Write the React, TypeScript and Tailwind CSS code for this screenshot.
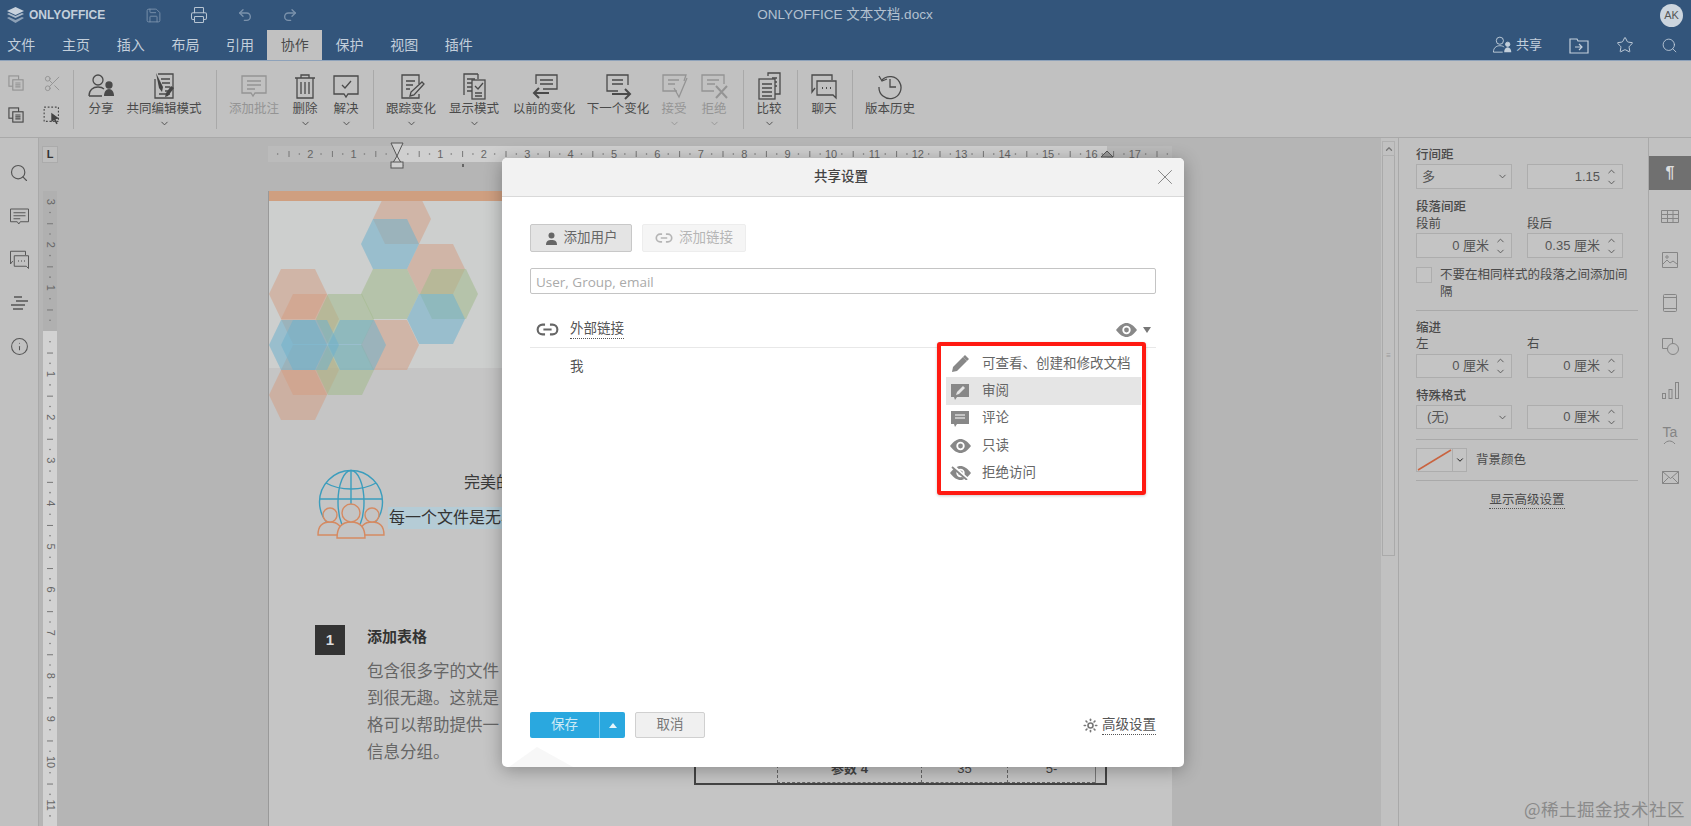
import type { ReactNode } from 'react';
import clsx from 'clsx';
import { ChevronDown, ChevronUp, Info, Printer, Redo2, Save, Scissors, Search, Star, Sun, Undo2, X } from 'lucide-react';

const Ico = ({ size = 28, sw = 1.3, children }: { size?: number; sw?: number; children: ReactNode }) => (
  <svg width={size} height={size} viewBox="0 0 28 28" fill="none" stroke="currentColor" strokeWidth={sw}>
    {children}
  </svg>
);

const CopyIco = () => (
  <Ico size={18} sw={1.8}>
    <rect x="3" y="3" width="15" height="16" />
    <rect x="9" y="9" width="16" height="16" fill="#c0c0c0" />
    <path d="M13 14h8M13 17h8M13 20h8" />
  </Ico>
);
const SelectIco = () => (
  <Ico size={20} sw={1.6}>
    <rect x="3" y="3" width="20" height="20" strokeDasharray="2.5 2.5" />
    <path d="M13 11l11 8-5 1 3 6-2 1-3-6-4 3z" fill="#444" stroke="none" />
  </Ico>
);
const ShareIco = ({ size = 28 }: { size?: number }) => (
  <Ico size={size}>
    <circle cx="11" cy="8" r="5" />
    <path d="M2 24c0-6 4-9 9-9 3 0 5 1 6 2M2 24h13" />
    <circle cx="22" cy="13" r="3" fill="currentColor" />
    <path d="M17 24c0-4 2-7 5-7s5 3 5 7z" fill="currentColor" stroke="none" />
  </Ico>
);
const CoEditIco = () => (
  <Ico>
    <path d="M8 2h15v24H5V7M11 7h9M12 11h8M15 15h5M15 19h5M9 22h11" />
    <path d="M6 1l7 14-1 5-3-4z" fill="#444" stroke="none" />
    <path d="M21 14l3 2-6 8-3 1 1-4z" fill="#444" stroke="none" />
  </Ico>
);
const NoteIco = () => (
  <Ico>
    <path d="M2 4h24v17H15l-2 3-2-3H2z" />
    <path d="M7 9h14M7 13h14M7 17h8" />
  </Ico>
);
const TrashIco = () => (
  <Ico>
    <path d="M4 6h20M10 6V3h8v3M6 6v20h16V6M10 10v12M14 10v12M18 10v12" />
  </Ico>
);
const ResolveIco = () => (
  <Ico>
    <path d="M2 4h24v18H16l-2 3-2-3H2z" />
    <path d="M10 13l3 3 6-7" />
  </Ico>
);
const TrackIco = () => (
  <Ico>
    <path d="M22 12V3H5v23h17v-4M9 9h9M9 13h7M9 17h4" />
    <path d="M25 10l2 2-10 11-4 1 1-4z" fill="#c0c0c0" />
  </Ico>
);
const DisplayIco = () => (
  <Ico>
    <path d="M4 23V2h14M18 2v5M7 7h8M7 11h5M7 15h5M7 19h5" />
    <rect x="12" y="8" width="13" height="19" />
    <path d="M15 14l3 3 5-6M15 21h7M15 24h7" />
  </Ico>
);
const PrevIco = () => (
  <Ico>
    <path d="M6 12V3h21v14H13M10 8h13M10 12h13" />
    <path d="M19 21H4M9 16l-5 5 5 5" strokeWidth="2" />
  </Ico>
);
const NextIco = () => (
  <Ico>
    <path d="M14 19H3V3h21v10M8 8h11M8 12h11" />
    <path d="M8 22h18M21 17l5 5-5 5" strokeWidth="2" />
  </Ico>
);
const AcceptIco = () => (
  <Ico>
    <path d="M17 19H3V3h23l-2 6M8 8h11M8 12h7" />
    <path d="M14 16l5 9 8-19" />
  </Ico>
);
const RejectIco = () => (
  <Ico>
    <path d="M14 19H2V3h22v9M7 8h12M7 12h8" />
    <path d="M16 14l11 12M27 14L16 26" strokeWidth="2" />
  </Ico>
);
const CompareIco = () => (
  <Ico>
    <path d="M13 4V1h12v21h-5" />
    <rect x="4" y="7" width="16" height="20" />
    <path d="M7 12h10M7 16h10M7 20h10M7 24h10M17 6h5M20 10h2M20 14h2" />
  </Ico>
);
const ChatIco = ({ size = 28 }: { size?: number }) => (
  <Ico size={size}>
    <path d="M5 16l-3 4V3h20v5" />
    <path d="M7 9h19v17l-3-3H7z" />
    <path d="M12 16h1M16 16h1M20 16h1" strokeWidth="2" />
  </Ico>
);
const HistoryIco = () => (
  <Ico>
    <path d="M6 8a11 11 0 1 1-3 7" />
    <path d="M3 4l3 5 5-2M14 7v8h6" />
  </Ico>
);
const LinkIco = ({ size = 20 }: { size?: number }) => (
  <Ico size={size}>
    <path d="M11 8H8a6 6 0 0 0 0 12h3M17 8h3a6 6 0 0 1 0 12h-3M9 14h10" strokeWidth="2.6" />
  </Ico>
);
const EyeIco = ({ off }: { off?: boolean }) => (
  <svg width="21" height="14" viewBox="0 0 21 14">
    <path d="M0 7C4 2 7 0 10.5 0S17 2 21 7c-4 5-7 7-10.5 7S4 12 0 7z" fill="#888" />
    <circle cx="10.5" cy="7" r="4.2" fill="#fff" />
    <circle cx="10.5" cy="7" r="2.4" fill="#888" />
    {off && <path d="M3 0l15 14" stroke="#fff" strokeWidth="3.5" />}
    {off && <path d="M2 1l15 13" stroke="#888" strokeWidth="1.8" />}
  </svg>
);
const PencilIco = () => (
  <svg width="18" height="18" viewBox="0 0 18 18">
    <path d="M1 17l1-5L12 2l4 4L6 16z" fill="#888" />
    <path d="M12 2l2-2 4 4-2 2z" fill="#888" />
  </svg>
);
const ReviewIco = () => (
  <svg width="18" height="17" viewBox="0 0 18 17">
    <path d="M0 1h18v13H6l-2 3-1-3H0z" fill="#888" />
    <path d="M5 12l1-3 6-6 2 2-6 6z" fill="#e5e5e5" />
  </svg>
);
const CommentIco = () => (
  <svg width="18" height="17" viewBox="0 0 18 17">
    <path d="M0 1h18v13H6l-2 3-1-3H0z" fill="#888" />
    <path d="M4 5h10M4 8h10" stroke="#fff" strokeWidth="1.2" />
  </svg>
);
const Logo = () => (
  <svg width="17" height="17" viewBox="0 0 17 17" fill="#c8d2dd">
    <path d="M8.5 0L17 4 8.5 8 0 4z" />
    <path d="M0 7l2-1 6.5 3L15 6l2 1-8.5 4z" opacity=".8" />
    <path d="M0 11l2-1 6.5 3L15 10l2 1-8.5 5z" opacity=".6" />
  </svg>
);

const hexes: [number, number, string][] = [
  [402, 218, 'o'], [436, 268, 'o'], [390, 344, 'o'], [298, 293, 'o'], [310, 318, 'o'], [310, 369, 'o'], [298, 394, 'o'],
  [390, 293, 'g'], [449, 293, 'g'], [345, 318, 'g'], [345, 369, 'g'],
  [390, 243, 'b'], [436, 318, 'b'], [357, 344, 'b'], [298, 344, 'b'], [310, 344, 'b'],
];
const hexFill: Record<string, string> = { o: '#d49c80', b: '#6fb0cc', g: '#a3b98c' };

const Hexagons = () => (
  <svg className="absolute left-0 top-0" width="240" height="226" viewBox="269 200 240 226">
    {hexes.map(([x, y, c], i) => (
      <polygon
        key={i}
        points={`${x - 29},${y} ${x - 17},${y - 25} ${x + 17},${y - 25} ${x + 29},${y} ${x + 17},${y + 25} ${x - 17},${y + 25}`}
        fill={hexFill[c]}
        fillOpacity={c === 'o' ? 0.5 : 0.55}
      />
    ))}
  </svg>
);

const Globe = () => (
  <svg width="68" height="70" viewBox="0 0 68 70" fill="none" strokeWidth="1.4">
    <g stroke="#3b9dbd">
      <circle cx="34" cy="33" r="31.5" />
      <ellipse cx="34" cy="33" rx="13" ry="31.5" />
      <path d="M34 1v40M3 30h62M9 14c14 8 36 8 50 0" />
    </g>
    <g stroke="#d58a62" fill="#c4c4c4">
      <path d="M1 66c0-10 5-13 12-13s12 3 12 13z" />
      <path d="M43 66c0-10 5-13 12-13s12 3 12 13z" />
      <circle cx="13" cy="46" r="7" />
      <circle cx="55" cy="46" r="7" />
      <path d="M20 69c0-12 6-16 14-16s14 4 14 16z" />
      <circle cx="34" cy="44" r="9" />
    </g>
  </svg>
);

const HRuler = () => {
  const zero = 129;
  const cm = 43.4;
  const marks = Array.from({ length: 21 }, (_, i) => i - 3);
  return (
    <svg className="overflow-visible" width="904" height="16" viewBox="0 0 904 16">
      <rect width="904" height="16" fill="#bbbbbb" />
      <rect x={zero} width="710" height="16" fill="#cfcfcf" />
      {marks.map((n) => (
        <g key={n}>
          {n !== 0 && n > -3 && (
            <text x={zero + n * cm} y="12" textAnchor="middle" fontSize="11" fill="#666">
              {Math.abs(n)}
            </text>
          )}
          <circle cx={zero + (n + 0.25) * cm} cy="8" r="0.8" fill="#777" />
          <rect x={zero + (n + 0.5) * cm} y="5" width="1" height="6" fill="#777" />
          <circle cx={zero + (n + 0.75) * cm} cy="8" r="0.8" fill="#777" />
        </g>
      ))}
      <path d="M123-3h12l-6 13zM129 10l-6 10h12z" fill="#cfcfcf" stroke="#555" />
      <rect x="123" y="16" width="12" height="6" fill="#cfcfcf" stroke="#555" />
      <path d="M833 11l6-6 6 6z" fill="#999" stroke="#555" />
      <rect x="194" y="18" width="2" height="3" fill="#666" />
    </svg>
  );
};

const VRuler = () => {
  const zero = 140;
  const cm = 43.1;
  const marks = Array.from({ length: 15 }, (_, i) => i - 3);
  return (
    <svg width="14" height="640" viewBox="0 0 14 640">
      <rect width="14" height="140" fill="#b0b0b0" />
      <rect y="140" width="14" height="500" fill="#d2d2d2" />
      {marks.map((n) => (
        <g key={n}>
          {n !== 0 && (
            <text x="7" y={zero + n * cm} transform={`rotate(90 7 ${zero + n * cm})`} textAnchor="middle" dominantBaseline="middle" fontSize="11" fill="#666">
              {Math.abs(n)}
            </text>
          )}
          <circle cx="7" cy={zero + (n + 0.25) * cm} r="0.8" fill="#777" />
          <rect x="4" y={zero + (n + 0.5) * cm} width="6" height="1" fill="#777" />
          <circle cx="7" cy={zero + (n + 0.75) * cm} r="0.8" fill="#777" />
        </g>
      ))}
    </svg>
  );
};

const Sep = () => <div className="mt-[9px] h-[59px] w-px shrink-0 bg-[#a9a9a9]" />;

const ToolBtn = ({ w, label, icon, caret, dim }: { w: string; label: string; icon: ReactNode; caret?: boolean; dim?: boolean }) => (
  <div className={clsx('flex shrink-0 flex-col items-center pt-[11px]', w, dim ? 'text-[#949494]' : 'text-[#4a4a4a]')}>
    <div className="h-7">{icon}</div>
    <div className="mt-px h-4 whitespace-nowrap text-[12.5px] leading-4">{label}</div>
    {caret && <ChevronDown size={11} strokeWidth={2} className="mt-[1px]" />}
  </div>
);

const Toolbar = () => (
  <div className="flex h-[76px] shrink-0 bg-[#c1c1c1]">
    <div className="mt-[6px] grid h-16 w-[73px] shrink-0 grid-cols-[32px_36px] grid-rows-2 place-items-center gap-x-[2px] text-[#4a4a4a]">
      <span className="text-[#949494]"><CopyIco /></span>
      <Scissors size={19} strokeWidth={1.2} className="text-[#949494]" />
      <CopyIco />
      <SelectIco />
    </div>
    <Sep />
    <ToolBtn w="w-[54px]" label="分享" icon={<ShareIco />} />
    <ToolBtn w="w-[72px] mr-[16px]" label="共同编辑模式" icon={<CoEditIco />} caret />
    <Sep />
    <ToolBtn w="w-[74px]" label="添加批注" icon={<NoteIco />} dim />
    <ToolBtn w="w-[28px]" label="删除" icon={<TrashIco />} caret />
    <ToolBtn w="w-[54px]" label="解决" icon={<ResolveIco />} caret />
    <Sep />
    <ToolBtn w="w-[74px]" label="跟踪变化" icon={<TrackIco />} caret />
    <ToolBtn w="w-[52px]" label="显示模式" icon={<DisplayIco />} caret />
    <ToolBtn w="w-[88px]" label="以前的变化" icon={<PrevIco />} />
    <ToolBtn w="w-[60px]" label="下一个变化" icon={<NextIco />} />
    <ToolBtn w="w-[52px]" label="接受" icon={<AcceptIco />} caret dim />
    <ToolBtn w="w-[28px] mr-[15px]" label="拒绝" icon={<RejectIco />} caret dim />
    <Sep />
    <ToolBtn w="w-[50px] mr-[3px]" label="比较" icon={<CompareIco />} caret />
    <Sep />
    <ToolBtn w="w-[52px] mr-[2px]" label="聊天" icon={<ChatIco />} />
    <Sep />
    <ToolBtn w="w-[74px]" label="版本历史" icon={<HistoryIco />} />
  </div>
);

const tabs = ['文件', '主页', '插入', '布局', '引用', '协作', '保护', '视图', '插件'];

const Header = () => (
  <div className="shrink-0 bg-[#33557b] text-[#c3cfdb]">
    <div className="flex h-[30px] items-center">
      <div className="flex flex-1 items-center pl-[7px]">
        <Logo />
        <span className="ml-[5px] text-[12px] font-bold leading-none">ONLYOFFICE</span>
        <Save size={17} strokeWidth={1.3} className="ml-[40px] text-[#7b92ac]" />
        <Printer size={18} strokeWidth={1.4} className="ml-[28px] text-[#b7c4d2]" />
        <Undo2 size={16} strokeWidth={2} className="ml-[29px] text-[#7b92ac]" />
        <Redo2 size={16} strokeWidth={2} className="ml-[29px] text-[#7b92ac]" />
      </div>
      <div className="text-[13.5px] text-[#b3c1d0]">ONLYOFFICE 文本文档.docx</div>
      <div className="flex flex-1 justify-end pr-2">
        <div className="flex h-[23px] w-[23px] items-center justify-center rounded-full bg-[#ccd5de] text-[11px] text-[#555]">AK</div>
      </div>
    </div>
    <div className="flex h-[31px] items-end border-b border-[#8ea2ba]">
      <div className="flex">
        {tabs.map((t, i) => (
          <div key={t} className={clsx('flex h-[30px] w-[54.7px] items-center justify-center text-[14px]', i === 0 && '-ml-[6px]', t === '协作' && 'bg-[#c1c1c1] text-[#4a4a4a]')}>
            {t}
          </div>
        ))}
      </div>
      <div className="ml-auto flex h-[30px] items-center pr-[13px]">
        <ShareIco size={20} />
        <span className="ml-[4px] text-[13px]">共享</span>
        <svg className="ml-[27px]" width="20" height="18" viewBox="0 0 20 18" fill="none" stroke="currentColor" strokeWidth="1.2">
          <path d="M1 3h7l1 2h10v12H1zM6 11h7M10 8l3 3-3 3" />
        </svg>
        <Star size={18} strokeWidth={1.3} className="ml-[27px]" />
        <Search size={17} strokeWidth={1.2} className="ml-[27px]" />
      </div>
    </div>
  </div>
);

const LeftBar = () => (
  <div className="flex w-[39px] shrink-0 flex-col items-center border-r border-[#a9a9a9] bg-[#c1c1c1] pt-[13px] text-[#555]">
    <div className="flex h-[43.5px] items-center"><Search size={20} strokeWidth={1.4} /></div>
    <div className="flex h-[43.5px] items-center"><Ico size={21}><path d="M2 4h24v17H15l-2 3-2-3H2z" /><path d="M6 9h16M6 13h16M6 17h9" /></Ico></div>
    <div className="flex h-[43.5px] items-center"><ChatIco size={21} /></div>
    <div className="flex h-[43.5px] items-center">
      <svg width="18" height="14" viewBox="0 0 18 14" stroke="currentColor" strokeWidth="1.4"><path d="M4 1h8M6 5h12M1 9h14M3 13h10" /></svg>
    </div>
    <div className="flex h-[43.5px] items-center"><Info size={19} strokeWidth={1.3} /></div>
  </div>
);

const Canvas = () => (
  <div className="flex min-w-0 flex-1 overflow-hidden bg-[#b5b5b5]">
    <div className="ml-[3px] w-4 shrink-0 pt-2">
      <div className="flex h-[17px] w-4 items-center justify-center border border-[#ababab] bg-[#bebebe] text-[11px] font-black leading-none text-[#333]">L</div>
      <div className="ml-px mt-[28px]"><VRuler /></div>
    </div>
    <div className="ml-[210px] w-[904px] shrink-0 pt-2">
      <HRuler />
      <Page />
    </div>
  </div>
);

const Page = () => (
  <div className="mt-[29px] h-[700px] border-l border-[#999] bg-[#c5c5c5]">
    <div className="h-[10px] bg-[#cf9f80]" />
    <div className="relative h-[167px] bg-[#cdcfce]">
      <Hexagons />
    </div>
    <div className="ml-[48px] mt-[101px] flex">
      <Globe />
      <div className="ml-[3px] w-[200px] whitespace-nowrap text-[16px]">
        <div className="ml-[76px] h-[26px] leading-7 text-[#3a3a3a]">完美的</div>
        <div className="mt-[12px] h-[22px] bg-[#b5ccd6] pl-px leading-[22px] text-[#333]">每一个文件是无与伦比</div>
      </div>
    </div>
    <div className="ml-[46px] mt-[86px] flex">
      <div className="flex w-[379px] shrink-0">
        <div className="flex h-[30px] w-[30px] shrink-0 items-center justify-center bg-[#333] text-[15px] font-bold text-[#ddd]">1</div>
        <div className="ml-[22px]">
          <div className="text-[15px] font-bold leading-6 text-[#333]">添加表格</div>
          <div className="mt-[9px] whitespace-nowrap text-[16.5px] leading-[27px] text-[#666]">
            <div>包含很多字的文件</div>
            <div>到很无趣。这就是</div>
            <div>格可以帮助提供一</div>
            <div>信息分组。</div>
          </div>
        </div>
      </div>
      <div className="mt-[67px] grid h-[93px] w-[413px] shrink-0 grid-cols-[81px_144px_86px_88px_10px] items-end border-2 border-[#444] text-center text-[13px] text-[#444]">
        <div className="h-7" />
        <div className="h-7 border-b border-l border-dashed border-[#666] font-bold leading-7">参数 4</div>
        <div className="h-7 border-b border-l border-dashed border-[#666] leading-7">35</div>
        <div className="h-7 border-b border-l border-dashed border-[#666] leading-7">5-</div>
        <div className="h-7 border-l border-[#777]" />
      </div>
    </div>
    <div className="ml-[46px] mt-[42px] flex">
      <div className="h-5 w-[30px] bg-[#444]" />
      <div className="ml-[349px] w-[413px] border-t border-[#555]" />
    </div>
  </div>
);

const Spin = ({ value }: { value: string }) => (
  <div className="flex h-full w-24 items-center justify-end border border-[#adadad] bg-[#c4c4c4] pr-[5px] text-[13px] text-[#555]">
    <span>{value}</span>
    <div className="ml-[6px] flex flex-col text-[#555]">
      <ChevronUp size={11} strokeWidth={2} />
      <ChevronDown size={11} strokeWidth={2} />
    </div>
  </div>
);

const Sel = ({ value, pad }: { value: string; pad: string }) => (
  <div className={clsx('flex h-full w-24 items-center justify-between border border-[#adadad] bg-[#c4c4c4] pr-[3px] text-[13px] text-[#555]', pad)}>
    <span>{value}</span>
    <ChevronDown size={11} strokeWidth={2} />
  </div>
);

const Label = ({ children, bold, cls }: { children: ReactNode; bold?: boolean; cls?: string }) => (
  <div className={clsx('h-4 text-[12.5px] leading-4 text-[#4a4a4a]', bold && 'font-medium', cls)}>{children}</div>
);

const Rule = ({ cls }: { cls: string }) => <div className={clsx('h-px bg-[#a9a9a9]', cls)} />;

const RightPanel = () => (
  <div className="flex shrink-0">
    <div className="ml-px w-[13px] bg-[#c1c1c1]">
      <div className="mt-[3px] flex h-[15px] items-center justify-center border border-[#b0b0b0] text-[#777]">
        <ChevronUp size={10} strokeWidth={3} />
      </div>
      <div className="flex h-[400px] items-center justify-center border border-t-0 border-[#aaaaaa] text-[8px] leading-[3px] text-[#999]">≡</div>
    </div>
    <div className="ml-[3px] w-[251px] border-x border-[#a9a9a9] bg-[#c1c1c1] pl-[17px] pr-[10px]">
      <Label bold cls="mt-[9px]">行间距</Label>
      <div className="mt-px flex h-[25px] gap-[15px]"><Sel value="多" pad="pl-[5px]" /><Spin value="1.15" /></div>
      <Label bold cls="mt-[10px]">段落间距</Label>
      <div className="flex gap-[15px]"><Label cls="mt-px w-24">段前</Label><Label cls="mt-px w-24">段后</Label></div>
      <div className="mt-px flex h-[25px] gap-[15px]"><Spin value="0 厘米" /><Spin value="0.35 厘米" /></div>
      <div className="mt-[9px] flex">
        <div className="h-[16px] w-[16px] shrink-0 border border-[#adadad] bg-[#c4c4c4]" />
        <div className="ml-2 w-[192px] text-[12.5px] leading-[17px] text-[#4a4a4a]">不要在相同样式的段落之间添加间隔</div>
      </div>
      <Rule cls="mt-[9px]" />
      <Label bold cls="mt-[9px]">缩进</Label>
      <div className="flex gap-[15px]"><Label cls="w-24">左</Label><Label cls="w-24">右</Label></div>
      <div className="mt-[2px] flex h-6 gap-[15px]"><Spin value="0 厘米" /><Spin value="0 厘米" /></div>
      <Label bold cls="mt-[10px]">特殊格式</Label>
      <div className="mt-px flex h-6 gap-[15px]"><Sel value="(无)" pad="pl-[10px]" /><Spin value="0 厘米" /></div>
      <Rule cls="mt-[10px]" />
      <div className="mt-[8px] flex items-center">
        <div className="flex h-6 w-[51px] items-center border border-[#adadad] bg-[#c4c4c4]">
          <svg width="35" height="22" viewBox="0 0 35 22"><path d="M1 21L34 1" stroke="#c9633f" strokeWidth="1.5" /></svg>
          <div className="flex h-full flex-1 items-center justify-center border-l border-[#adadad]"><ChevronDown size={10} strokeWidth={2} /></div>
        </div>
        <span className="ml-[9px] text-[12.5px] text-[#4a4a4a]">背景颜色</span>
      </div>
      <Rule cls="mt-[8px]" />
      <div className="mt-[6px] text-center">
        <span className="border-b border-dotted border-[#555] pb-px text-[12.5px] leading-4 text-[#4a4a4a]">显示高级设置</span>
      </div>
    </div>
    <div className="flex w-[42px] flex-col items-center bg-[#c1c1c1] pt-[13px] text-[#858585]">
      <div className="flex h-[43.5px] w-full items-center">
        <div className="flex h-[34px] w-full items-center justify-center bg-[#707070] text-[16px] font-bold text-[#ddd]">¶</div>
      </div>
      <div className="flex h-[43.5px] items-center">
        <svg width="18" height="13" viewBox="0 0 18 13" fill="none" stroke="currentColor"><path d="M.5.5h17v12H.5zM.5 4.5h17M.5 8.5h17M6.5.5v12M12 .5v12" /></svg>
      </div>
      <div className="flex h-[43.5px] items-center">
        <svg width="16" height="16" viewBox="0 0 16 16" fill="none" stroke="currentColor"><path d="M.5.5h15v15H.5zM1 12l4-4 3 3 3-2 4 3" /><circle cx="5" cy="5" r="1.2" /></svg>
      </div>
      <div className="flex h-[43.5px] items-center">
        <svg width="14" height="18" viewBox="0 0 14 18" fill="none" stroke="currentColor"><rect x=".5" y=".5" width="13" height="17" rx="1" /><path d="M1 3.5h12M1 14.5h12" /></svg>
      </div>
      <div className="flex h-[43.5px] items-center">
        <svg width="17" height="17" viewBox="0 0 17 17" fill="none" stroke="currentColor"><path d="M6 10.5H.5v-10h10V6" /><circle cx="11" cy="11" r="5.5" /></svg>
      </div>
      <div className="flex h-[43.5px] items-center">
        <svg width="17" height="17" viewBox="0 0 17 17" fill="none" stroke="currentColor"><rect x=".5" y="11.5" width="3" height="5" /><rect x="7" y="7.5" width="3" height="9" /><rect x="13.5" y=".5" width="3" height="16" /></svg>
      </div>
      <div className="flex h-[43.5px] flex-col items-center justify-center text-[14px] leading-[16px]">
        <span>Ta</span>
        <svg width="13" height="4" viewBox="0 0 13 4" fill="none" stroke="currentColor"><path d="M1 4c3-4 8-4 11 0" /></svg>
      </div>
      <div className="flex h-[43.5px] items-center">
        <svg width="17" height="13" viewBox="0 0 17 13" fill="none" stroke="currentColor"><path d="M.5.5h16v12H.5zM.5.5l8 7 8-7M.5 12.5l6-6M16.5 12.5l-6-6" /></svg>
      </div>
    </div>
  </div>
);

const accessRows = [
  { icon: <PencilIco />, text: '可查看、创建和修改文档' },
  { icon: <ReviewIco />, text: '审阅', active: true },
  { icon: <CommentIco />, text: '评论' },
  { icon: <EyeIco />, text: '只读' },
  { icon: <EyeIco off />, text: '拒绝访问' },
];

const Dialog = () => (
  <div className="absolute left-[502px] top-[158px] flex h-[609px] w-[682px] flex-col rounded-[5px] bg-white shadow-[0_3px_18px_rgba(0,0,0,0.3)]">
    <div className="flex h-[39px] shrink-0 items-center rounded-t-[5px] border-b border-[#d9d9d9] bg-[#f2f2f2] pl-[312px] pr-[6px]">
      <span className="text-[13.5px] font-medium text-[#444]">共享设置</span>
      <X size={26} strokeWidth={0.8} className="ml-auto text-[#777]" />
    </div>
    <div className="relative flex flex-1 flex-col px-7">
      <div className="mt-[27px] flex gap-[10px] text-[13.5px]">
        <div className="flex h-7 w-[102px] items-center justify-center rounded-[2px] border border-[#c8c8c8] bg-[#e4e4e4] text-[#666]">
          <svg width="13" height="13" viewBox="0 0 13 13" fill="#666"><circle cx="6.5" cy="3.5" r="3" /><path d="M1 13c0-4 2-5 5.5-5s5.5 1 5.5 5z" /></svg>
          <span className="ml-[6px]">添加用户</span>
        </div>
        <div className="flex h-7 w-[104px] items-center justify-center rounded-[2px] border border-[#ededed] bg-[#f5f5f5] text-[#b5b5b5]">
          <LinkIco size={18} />
          <span className="ml-[6px]">添加链接</span>
        </div>
      </div>
      <div className="mt-4 flex h-[26px] items-center rounded-[2px] border border-[#c4c4c4] pl-[5px] pt-[2px] font-['Open_Sans',sans-serif] text-[13.5px] text-[#aaa]">User, Group, email</div>
      <div className="mt-4 flex h-[38px] items-center border-b border-[#e8e8e8] pt-[2px] text-[#666]">
        <span className="ml-[6px] w-[34px]"><LinkIco size={23} /></span>
        <span className="border-b border-dotted border-[#555] text-[13.5px] leading-[18px] text-[#555]">外部链接</span>
        <span className="ml-auto"><EyeIco /></span>
        <span className="ml-[6px] mr-[5px] h-0 w-0 border-x-[4px] border-t-[6px] border-x-transparent border-t-[#777]" />
      </div>
      <div className="ml-10 mt-[9px] text-[13.5px] leading-5 text-[#555]">我</div>
      <div className="mb-[29px] mt-auto flex h-[26px] items-center">
        <div className="flex h-full w-[95px] rounded-[2px] bg-[#2aa8df] text-[13.5px] text-[#cdeaf6]">
          <div className="flex w-[69px] items-center justify-center">保存</div>
          <div className="flex flex-1 items-center justify-center border-l border-[#7ccbee]">
            <span className="h-0 w-0 border-x-[4px] border-b-[5px] border-x-transparent border-b-[#e6f5fb]" />
          </div>
        </div>
        <div className="ml-[10px] flex h-full w-[70px] items-center justify-center rounded-[2px] border border-[#d0d0d0] bg-[#f0f0f0] text-[13.5px] text-[#777]">取消</div>
        <Sun size={15} strokeWidth={2.6} className="ml-auto text-[#777]" />
        <span className="ml-[4px] border-b border-dotted border-[#555] text-[13.5px] leading-[18px] text-[#555]">高级设置</span>
      </div>
      <svg className="absolute bottom-0 left-[7px]" width="64" height="20" viewBox="0 0 64 20"><path d="M28 0l36 20H0z" fill="#f7f7f7" /></svg>
      <div className="absolute left-[435px] top-[145px] h-[153px] w-[209px] rounded-[3px] border-4 border-[#ff1a12] bg-white pt-1 shadow-[0_1px_3px_rgba(0,0,0,0.2)]">
        {accessRows.map((r) => (
          <div key={r.text} className={clsx('ml-[5px] mr-px flex h-[27.4px] items-center text-[13.5px] text-[#666]', r.active && 'bg-[#e5e5e5]')}>
            <span className="flex w-7 justify-center">{r.icon}</span>
            <span className="ml-2 whitespace-nowrap">{r.text}</span>
          </div>
        ))}
      </div>
    </div>
  </div>
);

export default function App() {
  return (
    <div className="relative flex h-screen w-full flex-col overflow-hidden bg-[#c1c1c1] font-['Liberation_Sans','Noto_Sans_CJK_SC',sans-serif]">
      <Header />
      <Toolbar />
      <div className="flex min-h-0 flex-1 border-t border-[#a9a9a9]">
        <LeftBar />
        <Canvas />
        <RightPanel />
      </div>
      <Dialog />
      <div className="absolute bottom-[4px] right-[6px] font-['Noto_Sans_CJK_SC',sans-serif] text-[17.5px] tracking-[0.5px] text-[#8a8a8a]">@稀土掘金技术社区</div>
    </div>
  );
}
